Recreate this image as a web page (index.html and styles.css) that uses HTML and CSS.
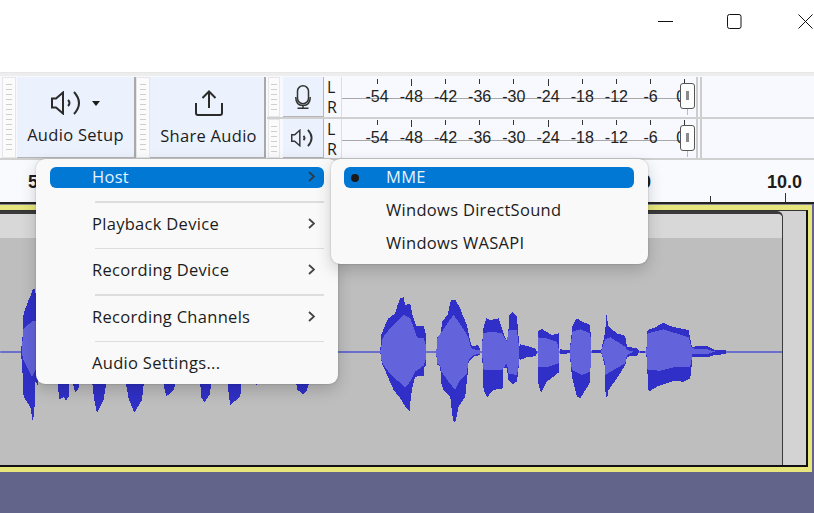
FILE: index.html
```html
<!DOCTYPE html>
<html lang="en">
<head>
    <meta charset="UTF-8">
    <title>Audacity</title>
    <link rel="stylesheet" href="styles.css">
</head>
<body>
    <div class="titlebar">
        <svg class="win-icon" viewBox="0 0 15 15"><path d="M0 7.5H15"/></svg>
        <svg class="win-icon win-max" viewBox="0 0 15 15"><rect x="0.5" y="0.5" width="13.5" height="14" rx="2"/></svg>
        <svg class="win-icon" viewBox="0 0 15 15"><path d="M0.5 0.5L14.5 14.5M14.5 0.5L0.5 14.5"/></svg>
    </div>

    <div class="toolbar">
        <div class="grip"></div>
        <div class="tool-btn audio-setup">
            <div class="tool-icon">
                <svg class="icon" width="34" height="24" viewBox="0 0 34 24">
                    <path d="M1 7.500H5L12 1.500V22.500L5 16.500H1Z"/>
                    <path d="M17 9Q20 12 17 15"/>
                    <path d="M23 1Q33 12 23 23"/>
                </svg>
                <svg class="caret" width="8" height="5" viewBox="0 0 8 5"><path d="M0 0H8L4 5Z"/></svg>
            </div>
            <span>Audio Setup</span>
        </div>
        <div class="grip"></div>
        <div class="tool-btn share-audio">
            <div class="tool-icon">
                <svg class="icon" width="28" height="26" viewBox="0 0 28 26">
                    <path d="M1 13V23Q1 25 3 25H25Q27 25 27 23V13"/>
                    <path d="M14 18V1.500M7.500 8L14 1.500L20.500 8"/>
                </svg>
            </div>
            <span>Share Audio</span>
        </div>
        <div class="meters">
            <div class="meter-row">
                <div class="grip small"></div>
                <div class="meter-btn">
                    <svg class="icon thin" width="16" height="24" viewBox="0 0 16 24">
                        <rect x="2.500" y="0.750" width="11" height="18" rx="5.500"/>
                        <path d="M0.750 12Q0.750 20.500 8 20.500Q15.250 20.500 15.250 12M8 20.500V23M2.500 23.250H13.500"/>
                    </svg>
                </div>
                <div class="lr"><span>L</span><span>R</span></div>
                <div class="meter">
                    <div class="scale">
                        <div class="mark"><i></i>-54</div>
                        <div class="mark long"><i></i>-48</div>
                        <div class="mark"><i></i>-42</div>
                        <div class="mark"><i></i>-36</div>
                        <div class="mark"><i></i>-30</div>
                        <div class="mark long"><i></i>-24</div>
                        <div class="mark"><i></i>-18</div>
                        <div class="mark"><i></i>-12</div>
                        <div class="mark"><i></i>-6</div>
                        <div class="mark"><i></i>0</div>
                    </div>
                    <div class="knob"></div>
                </div>
                <div class="meter-end"></div>
            </div>
            <div class="meter-row">
                <div class="grip small"></div>
                <div class="meter-btn">
                    <svg class="icon thin" width="25" height="18" viewBox="0 0 34 24">
                        <path d="M1 7.500H5L12 1.500V22.500L5 16.500H1Z" stroke-width="2"/>
                        <path d="M17 9Q20 12 17 15" stroke-width="2.500"/>
                        <path d="M23 1Q33 12 23 23" stroke-width="2.500"/>
                    </svg>
                </div>
                <div class="lr"><span>L</span><span>R</span></div>
                <div class="meter">
                    <div class="scale">
                        <div class="mark"><i></i>-54</div>
                        <div class="mark long"><i></i>-48</div>
                        <div class="mark"><i></i>-42</div>
                        <div class="mark"><i></i>-36</div>
                        <div class="mark"><i></i>-30</div>
                        <div class="mark long"><i></i>-24</div>
                        <div class="mark"><i></i>-18</div>
                        <div class="mark"><i></i>-12</div>
                        <div class="mark"><i></i>-6</div>
                        <div class="mark"><i></i>0</div>
                    </div>
                    <div class="knob"></div>
                </div>
                <div class="meter-end"></div>
            </div>
        </div>
    </div>

    <div class="ruler">
        <span class="time time-5">5.0</span>
        <span class="time time-9">9.0</span>
        <span class="time time-10">10.0</span>
        <i class="tick tick-minor"></i>
        <i class="tick tick-major"></i>
    </div>

    <div class="track-area">
        <div class="track-selected">
            <div class="track">
                <div class="clip">
                    <div class="clip-header"></div>
                    <div class="wave">
                        <svg class="wave-svg" viewBox="0 238 781.500 227" shape-rendering="crispEdges">
                            <path class="center-line" d="M0 352H782"/>
                            <g transform="translate(0 200) scale(.33333)">
                                <g class="dark">
                                    <polygon points="62,455 68,400 70,340 85,300 92,285 97,268 103,268 112,300 112,555 105,545 105,600 98,668 90,620 70,590 66,500"/>
                                    <polygon points="170,540 207,540 205,590 198,602 190,590 178,600"/>
                                    <polygon points="215,540 240,540 235,565 225,577"/>
                                    <polygon points="275,540 320,540 310,600 290,638 282,600"/>
                                    <polygon points="375,540 432,540 425,600 402,638 385,595"/>
                                    <polygon points="487,540 528,540 520,570 498,590"/>
                                    <polygon points="600,540 635,540 628,585 612,607 602,590"/>
                                    <polygon points="680,540 725,540 720,590 690,615"/>
                                    <polygon points="765,540 775,540 770,558"/>
                                    <polygon points="885,540 930,540 920,570 910,583 892,570"/>
                                </g>
                                <polygon class="light" points="64,455 70,385 95,365 112,360 112,500 95,530 70,480"/>
                            </g>
                            <g transform="translate(360 250) scale(.33333)">
                                <g class="dark">
                                    <polygon points="60,305 63,255 75,225 85,205 105,190 112,165 120,145 130,142 135,165 150,160 157,195 168,228 190,228 198,255 198,345 192,352 190,378 165,380 158,405 152,440 148,483 135,470 120,445 100,420 85,385 65,340"/>
                                    <polygon points="228,305 232,258 242,255 245,215 262,195 272,150 285,150 300,175 305,190 320,225 328,265 335,290 352,285 360,298 360,315 340,320 325,335 322,372 315,440 295,470 285,518 278,510 270,440 250,420 243,400 240,348 230,345"/>
                                    <polygon points="365,305 368,240 378,205 392,212 400,208 415,205 425,235 437,268 443,270 447,195 458,186 470,200 475,260 476,345 470,395 458,402 445,390 440,355 428,355 427,415 400,420 380,442 370,420 368,360"/>
                                    <polygon points="475,295 480,283 500,288 525,295 530,305 528,318 500,322 480,330 475,320"/>
                                    <polygon points="532,245 545,237 575,255 595,250 597,305 595,368 560,395 543,428 535,405 532,350"/>
                                    <polygon points="598,298 630,300 630,310 598,312"/>
                                    <polygon points="628,305 637,225 650,205 665,215 690,225 693,305 688,400 660,445 650,440 635,380"/>
                                    <polygon points="695,300 722,300 722,310 695,310"/>
                                    <polygon points="722,305 735,245 738,192 745,230 770,250 795,258 800,290 830,295 838,305 830,318 800,320 795,345 770,385 745,420 740,448 735,420 733,345"/>
                                    <polygon points="838,302 855,302 855,308 838,308"/>
                                    <polygon points="858,305 862,240 885,232 910,218 935,230 985,240 995,290 1040,288 1065,300 1098,300 1098,312 1065,315 1040,322 997,320 990,385 970,395 940,393 890,410 865,425 860,345"/>
                                </g>
                                <g class="light">
                                    <polygon points="60,305 68,262 90,235 110,215 130,195 150,205 163,240 170,262 190,265 197,285 197,325 190,347 165,365 150,395 135,412 110,390 85,365 65,338"/>
                                    <polygon points="228,305 232,262 245,245 265,215 280,195 295,215 315,245 325,265 332,292 340,298 360,300 360,310 340,315 325,330 320,370 300,390 285,420 265,395 243,365 240,345 230,340"/>
                                    <polygon points="365,305 368,250 395,245 425,250 440,275 445,240 470,240 476,290 476,340 470,375 445,370 440,340 425,360 395,360 370,360"/>
                                    <polygon points="532,262 560,265 590,275 598,305 595,340 560,352 532,352"/>
                                    <polygon points="628,305 637,245 660,238 690,250 694,305 690,365 665,375 635,360"/>
                                    <polygon points="722,305 735,268 750,262 795,290 800,300 820,305 800,315 795,340 760,360 735,375 733,335"/>
                                    <polygon points="858,305 862,250 910,238 985,262 995,295 1040,298 1065,305 1040,312 997,312 990,350 940,352 900,362 862,360"/>
                                </g>
                            </g>
                        </svg>
                    </div>
                </div>
                <div class="track-gutter"></div>
            </div>
        </div>
    </div>

    <div class="menu main-menu">
        <div class="menu-item active">Host<svg class="chevron" width="7" height="11" viewBox="0 0 7 11"><path d="M1 1L6 5.500L1 10"/></svg></div>
        <div class="menu-sep"></div>
        <div class="menu-item">Playback Device<svg class="chevron" width="7" height="11" viewBox="0 0 7 11"><path d="M1 1L6 5.500L1 10"/></svg></div>
        <div class="menu-sep"></div>
        <div class="menu-item">Recording Device<svg class="chevron" width="7" height="11" viewBox="0 0 7 11"><path d="M1 1L6 5.500L1 10"/></svg></div>
        <div class="menu-sep"></div>
        <div class="menu-item">Recording Channels<svg class="chevron" width="7" height="11" viewBox="0 0 7 11"><path d="M1 1L6 5.500L1 10"/></svg></div>
        <div class="menu-sep"></div>
        <div class="menu-item">Audio Settings...</div>
    </div>

    <div class="menu sub-menu">
        <div class="menu-item active"><i class="bullet"></i>MME</div>
        <div class="menu-item">Windows DirectSound</div>
        <div class="menu-item">Windows WASAPI</div>
    </div>
</body>
</html>
```

FILE: styles.css
```css
* {
    box-sizing: border-box;
}

body {
    position: relative;
    width: 814px;
    height: 513px;
    margin: 0;
    overflow: hidden;
    background-color: #62648a;
    color: #1c1c1c;
    font-family: "Open Sans", Arial, sans-serif;
    font-size: 16.5px;
    letter-spacing: 0.3px;
}

.titlebar {
    display: flex;
    justify-content: flex-end;
    gap: 55px;
    height: 72px;
    padding: 14px 1px 0 0;
    background-color: #fff;
}

.win-icon {
    width: 15px;
    height: 15px;
    fill: none;
    stroke: #111;
    stroke-width: 1;
}

.win-max {
    margin: 0 1px 0 -1px;
}

/* toolbar */
.toolbar {
    display: flex;
    height: 88px;
    padding: 4px 0 0 2px;
    background-color: #f8f9fe;
    border-top: 1px solid #e6e6e6;
    border-bottom: 2px solid #d0d0d0;
    box-shadow: inset 0 3px 0 #ededed;
}

.grip {
    position: relative;
    flex: none;
    width: 14px;
    background-color: #fbfbfb;
    border: 1px solid #e6e6e6;
}

.grip::before {
    content: "";
    position: absolute;
    inset: 6px 3px 4px;
    background: repeating-linear-gradient(#cfcfcf 0 1px, transparent 1px 5px);
}

.tool-btn {
    display: flex;
    flex-direction: column;
    align-items: center;
    flex: none;
    padding-top: 13px;
    background-color: #ebf1fd;
    border-right: 2px solid #a9a9a9;
    border-bottom: 1px solid #b5b5b5;
}

.audio-setup {
    width: 119px;
    margin-left: 1px;
}

.share-audio {
    width: 116px;
    margin-right: 1px;
    padding-left: 3px;
}

.share-audio span {
    margin-top: 1px;
}

.tool-icon {
    display: flex;
    align-items: center;
    gap: 7px;
    height: 26px;
    margin-bottom: 8px;
}

.tool-btn span {
    line-height: 22px;
}

.icon {
    fill: none;
    stroke: #2b2b2b;
    stroke-width: 2;
}

.icon.thin {
    stroke: #333;
    stroke-width: 1.5;
}

.caret {
    fill: #1c1c1c;
}

/* meters */
.meters {
    display: flex;
    flex-direction: column;
    flex: 1;
}

.meter-row {
    display: flex;
    height: 42px;
    border-bottom: 2px solid #d0d0d0;
}

.meter-row:last-child {
    height: 39px;
    border-bottom: none;
}

.grip.small {
    width: 12px;
    margin: 0 3px 0 1px;
}

.grip.small::before {
    inset: 6px 2px 5px;
}

.meter-btn {
    display: flex;
    align-items: center;
    justify-content: center;
    flex: none;
    width: 41px;
    background-color: #ebf1fd;
    border-right: 1px solid #b5b5b5;
    border-bottom: 1px solid #b5b5b5;
}

.lr {
    display: flex;
    flex-direction: column;
    justify-content: space-between;
    flex: none;
    width: 17px;
    padding-left: 3px;
    font-size: 16px;
    letter-spacing: 0;
    line-height: 20px;
}

.meter {
    position: relative;
    flex: none;
    width: 355px;
    padding-left: 18px;
    background-color: #f8f9fe;
    border-left: 1px solid #dedede;
}

.meter::before {
    content: "";
    position: absolute;
    top: 21px;
    left: 0;
    width: 340px;
    height: 1px;
    background-color: #a8a8a8;
}

.scale {
    position: relative;
    display: flex;
    font-family: "Liberation Sans", Arial, sans-serif;
    font-size: 16px;
    letter-spacing: 0;
    line-height: 18px;
    color: #222;
}

.mark {
    flex: none;
    width: 34.2px;
    padding-top: 2px;
    text-align: center;
    white-space: nowrap;
}

/* the 0 sits left of its tick and runs under the knob */
.mark:last-child {
    padding-right: 8px;
}

.mark:last-child i {
    transform: translateX(4px);
}

.mark i {
    display: block;
    width: 1px;
    height: 5px;
    margin: 0 auto 4px;
    background-color: #333;
}

.mark.long i {
    height: 7px;
    margin-bottom: 2px;
}

.meter-row:last-child .mark {
    padding-top: 1px;
}

.knob {
    position: absolute;
    top: 6px;
    left: 338px;
    width: 15px;
    height: 26px;
    background-color: #fdfdfd;
    border: 1px solid #555;
    border-radius: 3px;
}

.knob::after {
    content: "";
    position: absolute;
    top: 7px;
    left: 5px;
    width: 3px;
    height: 9px;
    background-color: #8a8a8a;
}

.knob::before {
    content: "";
    position: absolute;
    bottom: -7px;
    left: 6px;
    width: 1px;
    height: 6px;
    background-color: #bbb;
}

.meter-end {
    flex: none;
    width: 6px;
    border-left: 2px solid #cdcdcd;
    border-right: 2px solid #cdcdcd;
}

/* ruler */
.ruler {
    position: relative;
    height: 42px;
    background-color: #f9fafe;
}

.time {
    position: absolute;
    top: 12px;
    font-family: "Liberation Sans", Arial, sans-serif;
    font-size: 18px;
    font-weight: bold;
    letter-spacing: 0;
    line-height: 20px;
}

.time-5 {
    left: 28px;
}

.time-9 {
    left: 626px;
}

.time-10 {
    left: 767px;
}

.tick {
    position: absolute;
    bottom: 0;
    width: 1px;
    background-color: #333;
}

.tick-minor {
    left: 710px;
    height: 6px;
}

.tick-major {
    left: 785px;
    height: 9px;
}

/* track */
.track-area {
    height: 270px;
    padding-right: 2px;
    border-top: 2px solid #222;
}

.track-selected {
    height: 268px;
    padding: 5px 4px 5px 0;
    background-color: #e6e67c;
    border-top: 1px solid #888;
}

.track {
    display: flex;
    height: 100%;
    background-color: #d3d3d3;
    border-top: 1px solid #333;
    border-right: 2px solid #111;
    border-bottom: 2px solid #111;
}

.clip {
    display: flex;
    flex-direction: column;
    flex: 1;
    border-top: 3px solid #3a3a3a;
    border-right: 1.5px solid #3a3a3a;
    border-top-right-radius: 6px;
}

.clip-header {
    flex: none;
    height: 24px;
    background-color: #d8d8d8;
    border-top-right-radius: 4px;
}

.wave {
    position: relative;
    flex: 1;
    background-color: #bebebe;
}

.wave-svg {
    position: absolute;
    inset: 0;
    width: 100%;
    height: 100%;
}

.center-line {
    stroke: #4d55cf;
    stroke-width: 1.5;
    shape-rendering: geometricPrecision;
}

.dark {
    fill: #3030c8;
}

.light {
    fill: #6363dc;
}

.track-gutter {
    flex: none;
    width: 23px;
}

/* popup menus */
.menu {
    position: absolute;
    top: 159px;
    padding: 8px 14px 0;
    background-color: #f9f9f9;
    border-radius: 9px;
    box-shadow: 0 0 2px rgba(0, 0, 0, 0.25), 0 6px 16px rgba(0, 0, 0, 0.18);
}

.main-menu {
    left: 36px;
    width: 302px;
    height: 225px;
}

.sub-menu {
    left: 331px;
    width: 317px;
    height: 105px;
    padding-left: 13px;
}

.menu-item {
    position: relative;
    display: flex;
    align-items: center;
    justify-content: space-between;
    height: 21px;
    padding: 0 9px 2px 42px;
    border-radius: 6px;
    line-height: 19px;
    white-space: nowrap;
}

.sub-menu .menu-item {
    margin-bottom: 12px;
}

.menu-item.active {
    background-color: #0078d4;
    color: #e8f2fb;
}

.chevron {
    fill: none;
    stroke: #444;
    stroke-width: 1.8;
}

.active .chevron {
    stroke: #2b3c4c;
}

.bullet {
    position: absolute;
    top: 7px;
    left: 7px;
    width: 8px;
    height: 8px;
    background-color: #1a1a1a;
    border-radius: 50%;
}

.menu-sep {
    height: 1.5px;
    margin: 13px 0 11px 45px;
    background-color: #dddddd;
}
```
